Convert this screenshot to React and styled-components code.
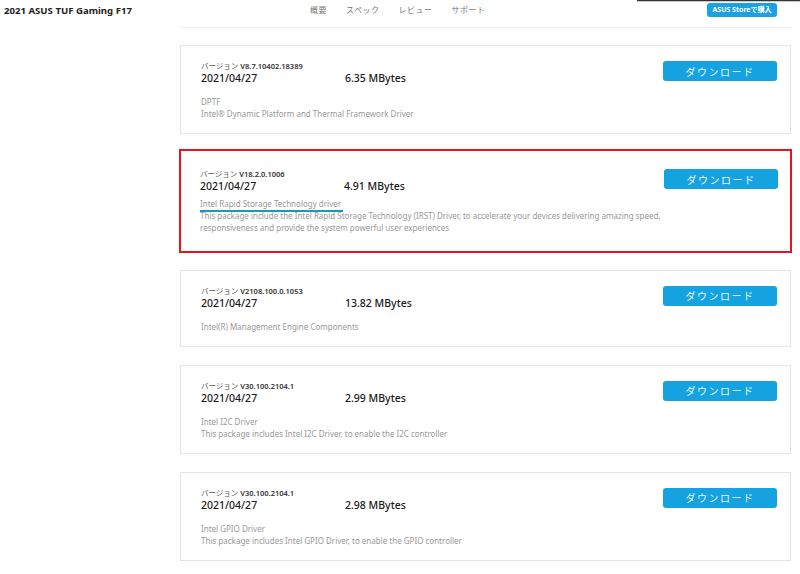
import React from "react";
import styled, { createGlobalStyle } from "styled-components";

const GlobalStyle = createGlobalStyle`
  html, body {
    margin: 0;
    padding: 0;
    background: #fff;
  }
  body {
    font-family: "Noto Sans", "Noto Sans CJK JP", sans-serif;
    color: #333;
  }
`;

const drivers = [
  {
    version: "V8.7.10402.18389",
    date: "2021/04/27",
    size: "6.35 MBytes",
    title: "DPTF",
    lines: ["Intel® Dynamic Platform and Thermal Framework Driver"],
  },
  {
    version: "V18.2.0.1006",
    date: "2021/04/27",
    size: "4.91 MBytes",
    title: "Intel Rapid Storage Technology driver",
    lines: [
      "This package include the Intel Rapid Storage Technology (IRST) Driver, to accelerate your devices delivering amazing speed,",
      "responsiveness and provide the system powerful user experiences",
    ],
    marked: true,
  },
  {
    version: "V2108.100.0.1053",
    date: "2021/04/27",
    size: "13.82 MBytes",
    title: "Intel(R) Management Engine Components",
    lines: [],
  },
  {
    version: "V30.100.2104.1",
    date: "2021/04/27",
    size: "2.99 MBytes",
    title: "Intel I2C Driver",
    lines: ["This package includes Intel I2C Driver, to enable the I2C controller"],
  },
  {
    version: "V30.100.2104.1",
    date: "2021/04/27",
    size: "2.98 MBytes",
    title: "Intel GPIO Driver",
    lines: ["This package includes Intel GPIO Driver, to enable the GPIO controller"],
  },
];

const Page = styled.div`
  position: relative;
  display: grid;
  grid-template-columns: 180px 611px;
  align-content: start;
  width: 800px;
  min-height: 574px;
`;

const MenuEdge = styled.div`
  position: absolute;
  top: 0;
  left: 637px;
  right: 0;
  height: 1px;
  background: #333;
  box-shadow: 0 1px 1px rgba(0, 0, 0, 0.25);
`;

const ModelName = styled.div`
  height: 20px;
  padding-left: 4px;
  display: flex;
  align-items: center;
  font-size: 9.6px;
  font-weight: 700;
  color: #222;
`;

const TopBar = styled.div`
  height: 27px;
  display: flex;
  align-items: flex-start;
  border-bottom: 1px solid #ececec;
  padding-right: 14px;
`;

const Nav = styled.nav`
  display: flex;
  gap: 19px;
  margin-left: 130px;
  padding-top: 4px;
`;

const NavItem = styled.span`
  font-size: 8px;
  color: #777;
  letter-spacing: 0.5px;
`;

const StoreButton = styled.button`
  margin-left: auto;
  margin-top: 3px;
  width: 70px;
  height: 14px;
  border: none;
  border-radius: 3px;
  background: #1ba2e1;
  color: #fff;
  font-family: inherit;
  font-size: 7px;
  font-weight: 700;
  padding: 0;
  line-height: 14px;
`;

const List = styled.div`
  grid-column: 2;
  display: flex;
  flex-direction: column;
  gap: 18px;
  padding-top: 17px;
`;

const Card = styled.div`
  display: flex;
  border: ${(p) => (p.$marked ? "2px solid #e8141b" : "1px solid #e4e4e4")};
  margin: ${(p) => (p.$marked ? "-3px -1px -1px" : "0")};
  padding: ${(p) => (p.$marked ? "18px 12px 17px 19px" : "15px 13px 13px 20px")};
`;

const Info = styled.div`
  flex: 1;
  display: flex;
  flex-direction: column;
`;

const Version = styled.div`
  font-size: 7.5px;
  line-height: 10px;
  color: #555;
  b {
    font-weight: 600;
    color: #333;
  }
`;

const Stats = styled.div`
  display: flex;
  font-size: 10.5px;
  line-height: 14px;
  color: #1a1a1a;
  font-weight: 500;
`;

const DateCol = styled.span`
  width: 144px;
`;

const Desc = styled.div`
  margin-top: ${(p) => (p.$marked ? "5px" : "11px")};
  font-size: 8px;
  line-height: 12px;
  color: #999;
`;

const DescTitle = styled.span`
  display: inline-block;
  line-height: ${(p) => (p.$marked ? "10.5px" : "12px")};
  border-bottom: ${(p) => (p.$marked ? "2px solid #1b97c3" : "none")};
  padding-right: ${(p) => (p.$marked ? "2px" : "0")};
`;

const DescLine = styled.div`
  margin-top: ${(p) => (p.$tight ? "-2px" : "0")};
`;

const DownloadButton = styled.button`
  align-self: flex-start;
  width: 114px;
  height: 20px;
  border: none;
  border-radius: 3px;
  background: #14a3e0;
  color: #eaf7fd;
  font-family: inherit;
  font-size: 10px;
  letter-spacing: 1.5px;
  padding: 0;
`;

export default function App() {
  return (
    <>
      <GlobalStyle />
      <Page>
        <MenuEdge />
        <ModelName>2021 ASUS TUF Gaming F17</ModelName>
        <TopBar>
          <Nav>
            <NavItem>概要</NavItem>
            <NavItem>スペック</NavItem>
            <NavItem>レビュー</NavItem>
            <NavItem>サポート</NavItem>
          </Nav>
          <StoreButton>ASUS Storeで購入</StoreButton>
        </TopBar>
        <List>
          {drivers.map((d, i) => (
            <Card key={i} $marked={d.marked}>
              <Info>
                <Version>
                  バージョン <b>{d.version}</b>
                </Version>
                <Stats>
                  <DateCol>{d.date}</DateCol>
                  <span>{d.size}</span>
                </Stats>
                <Desc $marked={d.marked}>
                  <DescTitle $marked={d.marked}>{d.title}</DescTitle>
                  {d.lines.map((l, j) => (
                    <DescLine key={j} $tight={d.marked && j === 0}>
                      {l}
                    </DescLine>
                  ))}
                </Desc>
              </Info>
              <DownloadButton>ダウンロード</DownloadButton>
            </Card>
          ))}
        </List>
      </Page>
    </>
  );
}
